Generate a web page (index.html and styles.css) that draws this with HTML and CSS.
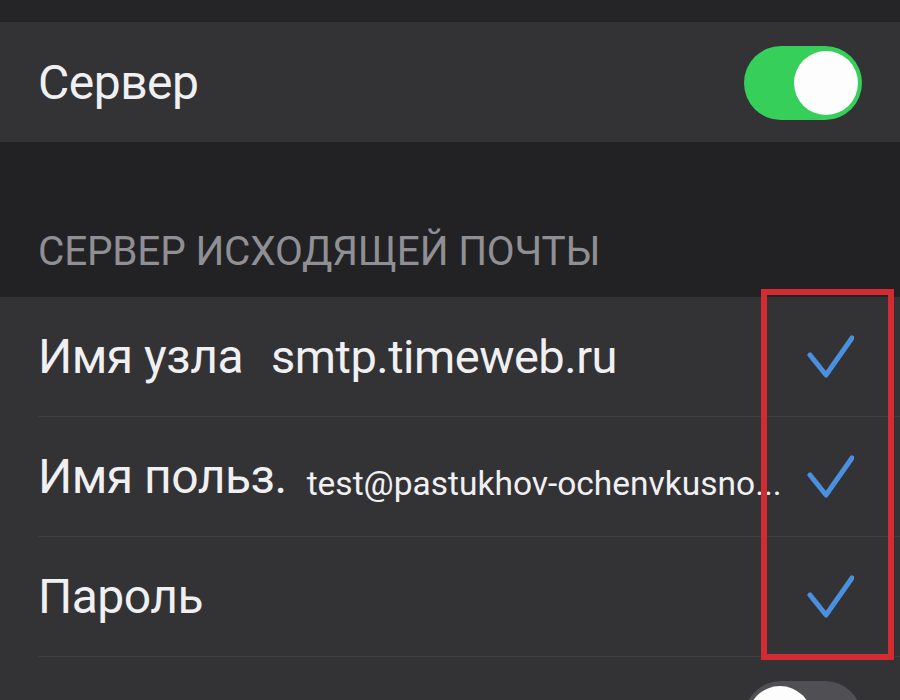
FILE: index.html
```html
<!DOCTYPE html>
<html lang="ru">

<head>
    <meta charset="UTF-8">
    <meta name="viewport" content="width=device-width, initial-scale=1.0">
    <title>Настройки почты</title>
    <link rel="stylesheet" href="styles.css">
</head>

<body>
    <div class="screen">
        <div class="top-band"></div>

        <div class="group">
            <div class="cell">
                <div class="cell-inner">
                    <span class="label">Сервер</span>
                    <span class="toggle on"><span class="knob"></span></span>
                </div>
            </div>
        </div>

        <div class="section-header">СЕРВЕР ИСХОДЯЩЕЙ ПОЧТЫ</div>

        <div class="group">
            <div class="cell">
                <div class="cell-inner sep">
                    <span class="label">Имя узла</span>
                    <span class="value">smtp.timeweb.ru</span>
                    <svg class="check" viewBox="0 0 48 44"><path d="M4 20 L20 40 L46 3" /></svg>
                </div>
            </div>
            <div class="cell">
                <div class="cell-inner sep">
                    <span class="label">Имя польз.</span>
                    <span class="value small">test@pastukhov-ochenvkusno...</span>
                    <svg class="check" viewBox="0 0 48 44"><path d="M4 20 L20 40 L46 3" /></svg>
                </div>
            </div>
            <div class="cell">
                <div class="cell-inner sep">
                    <span class="label">Пароль</span>
                    <svg class="check" viewBox="0 0 48 44"><path d="M4 20 L20 40 L46 3" /></svg>
                </div>
            </div>
            <div class="cell">
                <div class="cell-inner">
                    <span class="toggle off"><span class="knob"></span></span>
                </div>
            </div>
        </div>

        <!-- red highlight drawn over the checkmarks -->
        <div class="highlight"></div>
    </div>
</body>

</html>
```

FILE: styles.css
```css
body {
    margin: 0;
    background-color: #222224;
    font-family: Roboto, "Liberation Sans", sans-serif;
    color: #f0f0f2;
    overflow: hidden;
}

.screen {
    position: relative;
    width: 900px;
    height: 700px;
    overflow: hidden;
}

.top-band {
    height: 22px;
    background-color: #252527;
}

.group {
    background-color: #333336;
}

.cell {
    height: 120px;
    padding-left: 38px;
    display: flex;
}

.cell-inner {
    flex: 1;
    display: flex;
    align-items: center;
    padding-right: 38px;
}

.cell-inner.sep {
    border-bottom: 1px solid #3d3d40;
    box-sizing: border-box;
}

.label {
    font-size: 48px;
    letter-spacing: -0.5px;
    white-space: nowrap;
}

.value {
    font-size: 47px;
    letter-spacing: -0.5px;
    margin-left: 28px;
    white-space: nowrap;
}

.value.small {
    font-size: 33.5px;
    letter-spacing: 0;
    margin-left: 20px;
    padding-top: 14px;
}

.check {
    width: 48px;
    height: 44px;
    margin-left: auto;
    margin-right: 8px;
    fill: none;
    stroke: #4a8fe0;
    stroke-width: 5;
    stroke-linecap: round;
    stroke-linejoin: round;
}

.section-header {
    height: 155px;
    box-sizing: border-box;
    padding: 0 0 22px 38px;
    display: flex;
    align-items: flex-end;
    font-size: 40.5px;
    color: #8f8f94;
    letter-spacing: -0.2px;
}

.toggle {
    margin-left: auto;
    width: 118px;
    height: 74px;
    border-radius: 37px;
    display: flex;
    align-items: center;
    padding: 0 4px;
    box-sizing: border-box;
    align-self: flex-start;
    margin-top: 24px;
}

.toggle.on {
    background-color: #36cf5a;
    justify-content: flex-end;
}

.toggle.off {
    background-color: #505054;
    justify-content: flex-start;
}

.knob {
    width: 64px;
    height: 64px;
    border-radius: 50%;
    background-color: #fdfdfd;
}

.highlight {
    position: absolute;
    left: 761px;
    top: 289px;
    width: 133px;
    height: 371px;
    border: 6px solid #d42a32;
    box-sizing: border-box;
}
```
